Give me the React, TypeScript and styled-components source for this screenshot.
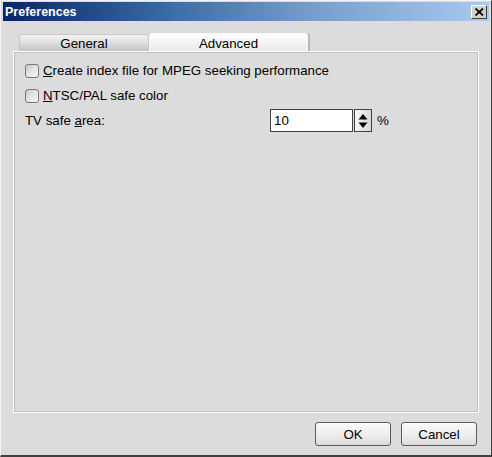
import React from "react";
import styled, { createGlobalStyle } from "styled-components";

const Global = createGlobalStyle`
  html, body { margin: 0; padding: 0; background: #dcdcdc; }
  body { font-family: "Liberation Sans", Arial, sans-serif; font-size: 13px; color: #000; }
`;

const Window = styled.div`
  width: 492px;
  height: 457px;
  box-sizing: border-box;
  background: #dcdcdc;
  border-top: 1px solid #f4f4f4;
  border-left: 1px solid #f4f4f4;
  border-right: 1px solid #404040;
  border-bottom: 2px solid #404040;
  display: flex;
  flex-direction: column;
  padding: 1px 2px 0 2px;
`;

const TitleBar = styled.div`
  height: 19px;
  display: flex;
  align-items: center;
  justify-content: space-between;
  padding: 0 2px 0 2px;
  background: linear-gradient(to right, #0a246a 0%, #3a6ea5 35%, #7a9fcf 65%, #a6caf0 100%);
`;

const Title = styled.span`
  color: #fff;
  font-weight: bold;
  font-size: 12.5px;
  font-family: "Liberation Sans", Arial, sans-serif;
`;

const CloseBtn = styled.div`
  width: 16px;
  height: 14px;
  box-sizing: border-box;
  background: #d4d0c8;
  border-top: 1px solid #fff;
  border-left: 1px solid #fff;
  border-right: 1px solid #404040;
  border-bottom: 1px solid #404040;
  display: flex;
  align-items: center;
  justify-content: center;
`;

const Body = styled.div`
  flex: 1;
  display: flex;
  flex-direction: column;
  padding: 12px 10px 9px 10px;
`;

const TabRow = styled.div`
  display: flex;
  align-items: flex-end;
  padding-left: 6px;
  height: 18px;
`;

const Tab = styled.div<{ $active?: boolean }>`
  box-sizing: border-box;
  width: ${(p) => (p.$active ? 159 : 130)}px;
  height: ${(p) => (p.$active ? 18 : 17)}px;
  display: flex;
  align-items: center;
  justify-content: center;
  font-size: 13.3px;
  border: 1px solid ${(p) => (p.$active ? "#f8f8f8" : "#c8c8c8")};
  border-bottom: none;
  border-radius: 3px 3px 0 0;
  background: ${(p) =>
    p.$active
      ? "linear-gradient(to bottom, #ffffff 0%, #f2f2f2 60%, #ebebeb 100%)"
      : "linear-gradient(to bottom, #f2f2f2 0%, #dedede 50%, #c4c4c4 100%)"};
  box-shadow: ${(p) => (p.$active ? "2px 0 0 #b8b8b8" : "none")};
  position: relative;
  z-index: ${(p) => (p.$active ? 1 : 0)};
  padding-top: 1px;
`;

const Panel = styled.div`
  flex: 1;
  box-sizing: border-box;
  border: 1px solid #fff;
  box-shadow: inset 1px 1px 0 #c0c0c0, inset -1px -1px 0 #c0c0c0;
  padding: 6px 11px;
  display: flex;
  flex-direction: column;
`;

const Row = styled.div`
  display: flex;
  align-items: center;
  height: 25px;
`;

const Check = styled.div`
  width: 14px;
  height: 14px;
  box-sizing: border-box;
  border: 1px solid #7a7a7a;
  border-radius: 3px;
  background: linear-gradient(135deg, #c8c8c8 0%, #e6e6e6 50%, #f4f4f4 100%);
  margin-right: 4px;
`;

const Label = styled.span`
  font-size: 13.3px;
  u { text-decoration: underline; }
`;

const FieldLabel = styled.span`
  width: 245px;
  font-size: 13.3px;
`;

const Input = styled.div`
  width: 83px;
  height: 23px;
  box-sizing: border-box;
  border: 1px solid #404040;
  background: #fff;
  display: flex;
  align-items: center;
  padding-left: 3px;
  font-size: 13.3px;
`;

const Spin = styled.div`
  width: 18px;
  height: 23px;
  box-sizing: border-box;
  border: 1px solid #404040;
  background: linear-gradient(to right, #f8f8f8, #d8d8d8);
  margin-left: 1px;
  display: flex;
  align-items: center;
  justify-content: center;
`;

const Pct = styled.span`
  margin-left: 5px;
  font-size: 13.3px;
`;

const Footer = styled.div`
  display: flex;
  justify-content: flex-end;
  gap: 10px;
  padding-top: 9px;
  padding-right: 2px;
`;

const Button = styled.div`
  width: 76px;
  height: 24px;
  box-sizing: border-box;
  border: 1px solid #5a5a5a;
  border-radius: 3px;
  background: linear-gradient(to bottom, #fafafa 0%, #ececec 60%, #dadada 100%);
  display: flex;
  align-items: center;
  justify-content: center;
  font-size: 13.3px;
`;

export default function App() {
  return (
    <>
      <Global />
      <Window>
        <TitleBar>
          <Title>Preferences</Title>
          <CloseBtn>
            <svg width="9" height="8" viewBox="0 0 9 8">
              <path d="M0.5 0.5 L8 7.5 M8 0.5 L0.5 7.5" stroke="#000" strokeWidth="1.8" />
            </svg>
          </CloseBtn>
        </TitleBar>
        <Body>
          <TabRow>
            <Tab>General</Tab>
            <Tab $active>Advanced</Tab>
          </TabRow>
          <Panel>
            <Row>
              <Check />
              <Label><u>C</u>reate index file for MPEG seeking performance</Label>
            </Row>
            <Row>
              <Check />
              <Label><u>N</u>TSC/PAL safe color</Label>
            </Row>
            <Row>
              <FieldLabel>TV safe <u>a</u>rea:</FieldLabel>
              <Input>10</Input>
              <Spin>
                <svg width="10" height="16" viewBox="0 0 10 16">
                  <path d="M5 1 L9.5 6.5 L0.5 6.5 Z" fill="#000" />
                  <path d="M5 15 L9.5 9.5 L0.5 9.5 Z" fill="#000" />
                </svg>
              </Spin>
              <Pct>%</Pct>
            </Row>
          </Panel>
          <Footer>
            <Button>OK</Button>
            <Button>Cancel</Button>
          </Footer>
        </Body>
      </Window>
    </>
  );
}
